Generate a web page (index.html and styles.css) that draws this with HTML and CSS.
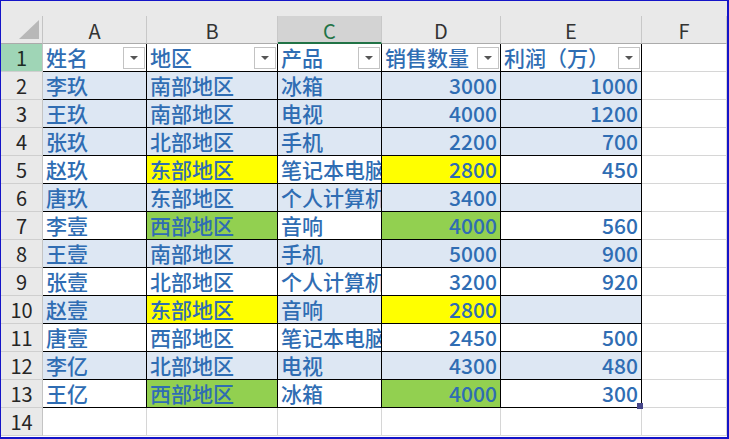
FILE: index.html
```html
<!DOCTYPE html>
<html>
<head>
<meta charset="utf-8">
<link rel="stylesheet" href="styles.css">
</head>
<body>
<div class="frame">
  <div class="strip"></div>
  <div class="sheet">
    <div class="corner"><span class="tri"></span></div>
    <div class="ch">A</div>
    <div class="ch">B</div>
    <div class="ch ch-sel">C</div>
    <div class="ch">D</div>
    <div class="ch">E</div>
    <div class="ch">F</div>

    <div class="rh rh-sel">1</div>
    <div class="c hd">姓名<span class="dd"></span></div>
    <div class="c hd">地区<span class="dd"></span></div>
    <div class="c hd">产品<span class="dd"></span></div>
    <div class="c hd">销售数量<span class="dd"></span></div>
    <div class="c hd">利润（万）<span class="dd"></span></div>
    <div class="g"></div>

    <div class="rh">2</div>
    <div class="c b">李玖</div><div class="c b">南部地区</div><div class="c b">冰箱</div><div class="c b n">3000</div><div class="c b n">1000</div><div class="g"></div>
    <div class="rh">3</div>
    <div class="c b">王玖</div><div class="c b">南部地区</div><div class="c b">电视</div><div class="c b n">4000</div><div class="c b n">1200</div><div class="g"></div>
    <div class="rh">4</div>
    <div class="c b">张玖</div><div class="c b">北部地区</div><div class="c b">手机</div><div class="c b n">2200</div><div class="c b n">700</div><div class="g"></div>
    <div class="rh">5</div>
    <div class="c">赵玖</div><div class="c y">东部地区</div><div class="c clip">笔记本电脑</div><div class="c y n">2800</div><div class="c n">450</div><div class="g"></div>
    <div class="rh">6</div>
    <div class="c b">唐玖</div><div class="c b">东部地区</div><div class="c b clip">个人计算机</div><div class="c b n">3400</div><div class="c b n"></div><div class="g"></div>
    <div class="rh">7</div>
    <div class="c">李壹</div><div class="c gr">西部地区</div><div class="c">音响</div><div class="c gr n">4000</div><div class="c n">560</div><div class="g"></div>
    <div class="rh">8</div>
    <div class="c b">王壹</div><div class="c b">南部地区</div><div class="c b">手机</div><div class="c b n">5000</div><div class="c b n">900</div><div class="g"></div>
    <div class="rh">9</div>
    <div class="c">张壹</div><div class="c">北部地区</div><div class="c clip">个人计算机</div><div class="c n">3200</div><div class="c n">920</div><div class="g"></div>
    <div class="rh">10</div>
    <div class="c b">赵壹</div><div class="c y">东部地区</div><div class="c b">音响</div><div class="c y n">2800</div><div class="c b n"></div><div class="g"></div>
    <div class="rh">11</div>
    <div class="c">唐壹</div><div class="c">西部地区</div><div class="c clip">笔记本电脑</div><div class="c n">2450</div><div class="c n">500</div><div class="g"></div>
    <div class="rh">12</div>
    <div class="c b">李亿</div><div class="c b">北部地区</div><div class="c b">电视</div><div class="c b n">4300</div><div class="c b n">480</div><div class="g"></div>
    <div class="rh">13</div>
    <div class="c">王亿</div><div class="c gr">西部地区</div><div class="c">冰箱</div><div class="c gr n">4000</div><div class="c n">300<span class="handle"></span></div><div class="g"></div>
    <div class="rh">14</div>
    <div class="g"></div><div class="g"></div><div class="g"></div><div class="g"></div><div class="g"></div><div class="g"></div>
  </div>
</div>
</body>
</html>
```
FILE: styles.css
```css
* { box-sizing: border-box; }
html, body { margin: 0; padding: 0; background: #fff; }
.frame {
  width: 729px;
  height: 439px;
  border-left: 1px solid #1414c8;
  border-top: 1px solid #1414c8;
  border-right: 2px solid #1414c8;
  border-bottom: 2px solid #1414c8;
  overflow: hidden;
  background: #fff;
}
.strip { height: 15px; background: #e9e9e9; }
.sheet {
  display: grid;
  grid-template-columns: 42px 104px 131px 104px 119px 141px 85px;
  grid-auto-rows: 28px;
  font-family: "Noto Sans CJK SC", "Noto Sans", sans-serif;
}
.corner {
  position: relative;
  background: #e9e9e9;
  border-right: 1px solid #c4c4c4;
  border-bottom: 1px solid #ababab;
}
.tri {
  position: absolute;
  right: 3px;
  bottom: 4px;
  width: 0; height: 0;
  border-left: 20px solid transparent;
  border-bottom: 19px solid #b8b8b8;
}
.ch {
  background: #e9e9e9;
  border-right: 1px solid #c8c8c8;
  border-bottom: 1px solid #ababab;
  display: flex;
  align-items: center;
  justify-content: center;
  font-size: 20px;
  color: #333;
  padding-top: 2px;
}
.ch-sel {
  background: #d3d3d3;
  border-bottom: 2px solid #217346;
  color: #217346;
}
.rh {
  background: #e9e9e9;
  border-right: 1px solid #c4c4c4;
  border-bottom: 1px solid #cfcfcf;
  display: flex;
  align-items: center;
  justify-content: center;
  font-size: 20px;
  color: #262626;
}
.rh-sel { background: #9fd5b6; color: #1c2b22; }
.c {
  position: relative;
  border-right: 1px solid #000;
  border-bottom: 1px solid #000;
  color: #2f6db3;
  font-size: 21px;
  font-weight: 500;
  line-height: 27px;
  padding: 0 3px;
  white-space: nowrap;
  background: #fff;
}
.c.clip { overflow: hidden; }
.c.b { background: #dde7f3; }
.c.y { background: #ffff00; }
.c.gr { background: #92d050; }
.c.n { text-align: right; }
.g {
  border-right: 1px solid #d6d6d6;
  border-bottom: 1px solid #d6d6d6;
  background: #fff;
}
.dd {
  position: absolute;
  right: 1px;
  top: 3px;
  width: 22px;
  height: 22px;
  background: #fff;
  border: 1px solid #c3c3c3;
}
.dd::after {
  content: "";
  position: absolute;
  left: 6px;
  top: 8px;
  border-left: 4px solid transparent;
  border-right: 4px solid transparent;
  border-top: 4px solid #555;
}
.handle {
  position: absolute;
  right: -2px;
  bottom: -2px;
  width: 6px;
  height: 6px;
  background: #46468a;
}
```
